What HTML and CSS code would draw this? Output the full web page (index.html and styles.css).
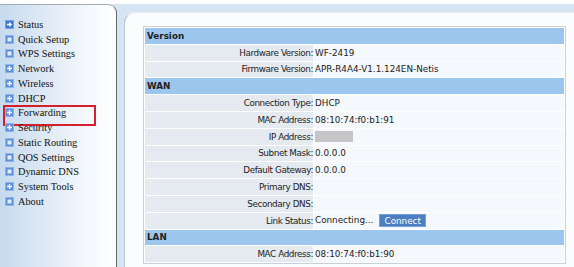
FILE: index.html
```html
<!DOCTYPE html>
<html lang="en">
<head>
    <meta charset="UTF-8">
    <title>Router Status</title>
    <link rel="stylesheet" href="styles.css">
</head>
<body>
    <div class="page">
        <!-- Left menu -->
        <div class="sidebar">
            <ul class="menu">
                <li><svg class="icon" viewBox="0 0 9 9"><rect x="0.5" y="0.5" width="8" height="8" fill="#3d76d0" stroke="#7aa3e3"/><path d="M2 4.5h4M4.3 2.6l1.9 1.9-1.9 1.9" stroke="#fff" stroke-width="1.3" fill="none"/></svg>Status</li>
                <li><svg class="icon" viewBox="0 0 9 9"><rect x="0.5" y="0.5" width="8" height="8" fill="#5c8fdc" stroke="#8fb2e8"/><rect x="2.5" y="2.5" width="4" height="4" fill="#e4ecfa"/></svg>Quick Setup</li>
                <li><svg class="icon" viewBox="0 0 9 9"><rect x="0.5" y="0.5" width="8" height="8" fill="#5c8fdc" stroke="#8fb2e8"/><rect x="2.5" y="2.5" width="4" height="4" fill="#e4ecfa"/></svg>WPS Settings</li>
                <li><svg class="icon" viewBox="0 0 9 9"><rect x="0.5" y="0.5" width="8" height="8" fill="#5c8fdc" stroke="#8fb2e8"/><path d="M4.5 2v5M2 4.5h5" stroke="#fff" stroke-width="1.4"/></svg>Network</li>
                <li><svg class="icon" viewBox="0 0 9 9"><rect x="0.5" y="0.5" width="8" height="8" fill="#5c8fdc" stroke="#8fb2e8"/><path d="M4.5 2v5M2 4.5h5" stroke="#fff" stroke-width="1.4"/></svg>Wireless</li>
                <li><svg class="icon" viewBox="0 0 9 9"><rect x="0.5" y="0.5" width="8" height="8" fill="#5c8fdc" stroke="#8fb2e8"/><path d="M4.5 2v5M2 4.5h5" stroke="#fff" stroke-width="1.4"/></svg>DHCP</li>
                <li class="marked"><svg class="icon" viewBox="0 0 9 9"><rect x="0.5" y="0.5" width="8" height="8" fill="#5c8fdc" stroke="#8fb2e8"/><path d="M4.5 2v5M2 4.5h5" stroke="#fff" stroke-width="1.4"/></svg>Forwarding</li>
                <li><svg class="icon" viewBox="0 0 9 9"><rect x="0.5" y="0.5" width="8" height="8" fill="#5c8fdc" stroke="#8fb2e8"/><path d="M4.5 2v5M2 4.5h5" stroke="#fff" stroke-width="1.4"/></svg>Security</li>
                <li><svg class="icon" viewBox="0 0 9 9"><rect x="0.5" y="0.5" width="8" height="8" fill="#5c8fdc" stroke="#8fb2e8"/><rect x="2.5" y="2.5" width="4" height="4" fill="#e4ecfa"/></svg>Static Routing</li>
                <li><svg class="icon" viewBox="0 0 9 9"><rect x="0.5" y="0.5" width="8" height="8" fill="#5c8fdc" stroke="#8fb2e8"/><rect x="2.5" y="2.5" width="4" height="4" fill="#e4ecfa"/></svg>QOS Settings</li>
                <li><svg class="icon" viewBox="0 0 9 9"><rect x="0.5" y="0.5" width="8" height="8" fill="#5c8fdc" stroke="#8fb2e8"/><rect x="2.5" y="2.5" width="4" height="4" fill="#e4ecfa"/></svg>Dynamic DNS</li>
                <li><svg class="icon" viewBox="0 0 9 9"><rect x="0.5" y="0.5" width="8" height="8" fill="#5c8fdc" stroke="#8fb2e8"/><path d="M4.5 2v5M2 4.5h5" stroke="#fff" stroke-width="1.4"/></svg>System Tools</li>
                <li><svg class="icon" viewBox="0 0 9 9"><rect x="0.5" y="0.5" width="8" height="8" fill="#5c8fdc" stroke="#8fb2e8"/><rect x="2.5" y="2.5" width="4" height="4" fill="#e4ecfa"/></svg>About</li>
            </ul>
        </div>

        <!-- Status panel -->
        <div class="panel">
            <table class="status">
                <tr class="head"><td colspan="2">Version</td></tr>
                <tr><td class="label">Hardware Version:</td><td class="value">WF-2419</td></tr>
                <tr><td class="label">Firmware Version:</td><td class="value">APR-R4A4-V1.1.124EN-Netis</td></tr>
                <tr class="head"><td colspan="2">WAN</td></tr>
                <tr><td class="label">Connection Type:</td><td class="value">DHCP</td></tr>
                <tr><td class="label">MAC Address:</td><td class="value">08:10:74:f0:b1:91</td></tr>
                <tr><td class="label">IP Address:</td><td class="value"><span class="hidden-ip"></span></td></tr>
                <tr><td class="label">Subnet Mask:</td><td class="value">0.0.0.0</td></tr>
                <tr><td class="label">Default Gateway:</td><td class="value">0.0.0.0</td></tr>
                <tr><td class="label">Primary DNS:</td><td class="value"></td></tr>
                <tr><td class="label">Secondary DNS:</td><td class="value"></td></tr>
                <tr><td class="label">Link Status:</td><td class="value">Connecting... <button class="connect">Connect</button></td></tr>
                <tr class="head"><td colspan="2">LAN</td></tr>
                <tr><td class="label">MAC Address:</td><td class="value">08:10:74:f0:b1:90</td></tr>
            </table>
        </div>
    </div>
</body>
</html>
```

FILE: styles.css
```css
/* General styles */
* {
    margin: 0;
    padding: 0;
    box-sizing: border-box;
}

body {
    background: #fff;
    overflow: hidden;
}

.page {
    display: flex;
    align-items: flex-start;
    gap: 7px;
    margin-top: 4px;
    height: 263px;
    background: #d6e5f3;
}

/* Sidebar menu */
.sidebar {
    width: 117px;
    height: 100%;
    border-top: 1px solid #a3abb4;
    border-right: 1px solid #5f6670;
    border-top-right-radius: 9px;
    background: linear-gradient(to right, #c6daee, #f4f8fc 75%, #ffffff);
    padding-top: 12px;
}

.menu {
    list-style: none;
    font-family: "Liberation Serif", serif;
    font-size: 10.3px;
    color: #111;
}

.menu li {
    position: relative;
    display: flex;
    align-items: center;
    height: 14.75px;
    padding-left: 5px;
}

.icon {
    width: 9px;
    height: 9px;
    margin-right: 4px;
    flex-shrink: 0;
}

.menu li.marked::after {
    content: '';
    position: absolute;
    left: 3px;
    top: -1px;
    width: 89px;
    height: 17px;
    border: 2px solid #d51f2d;
}

/* Main panel */
.panel {
    flex: 1;
    height: 255px;
    margin-top: 8px;
    background: #fbfcfe;
    border-top: 1px solid #e4ecf4;
    border-left: 1px solid #b9c6d3;
    border-top-left-radius: 11px;
    padding: 13px 8px 0 18px;
}

.status {
    width: 423px;
    border: 1px solid #c7d1db;
    border-spacing: 1px;
    background: #fff;
    font-family: "DejaVu Sans", sans-serif;
    font-size: 8.8px;
    color: #222;
}

.status td {
    height: 15.8px;
    padding: 0;
    white-space: nowrap;
}

.status .head td {
    background: #9dc6ef;
    font-weight: bold;
    padding-left: 2px;
}

.status .label {
    width: 168px;
    background: #e4eaf0;
    text-align: right;
    letter-spacing: -0.4px;
}

.status .value {
    background: #f5f8fc;
    padding-left: 1px;
}

.hidden-ip {
    display: inline-block;
    width: 38px;
    height: 11px;
    background: #c6c6c6;
    vertical-align: middle;
}

.connect {
    margin-left: 3px;
    width: 47px;
    height: 13px;
    background: #4b7ec2;
    border: 1px solid #7aa0d2;
    color: #fff;
    font-family: "DejaVu Sans", sans-serif;
    font-size: 8.8px;
    line-height: 10px;
    vertical-align: middle;
}
```
